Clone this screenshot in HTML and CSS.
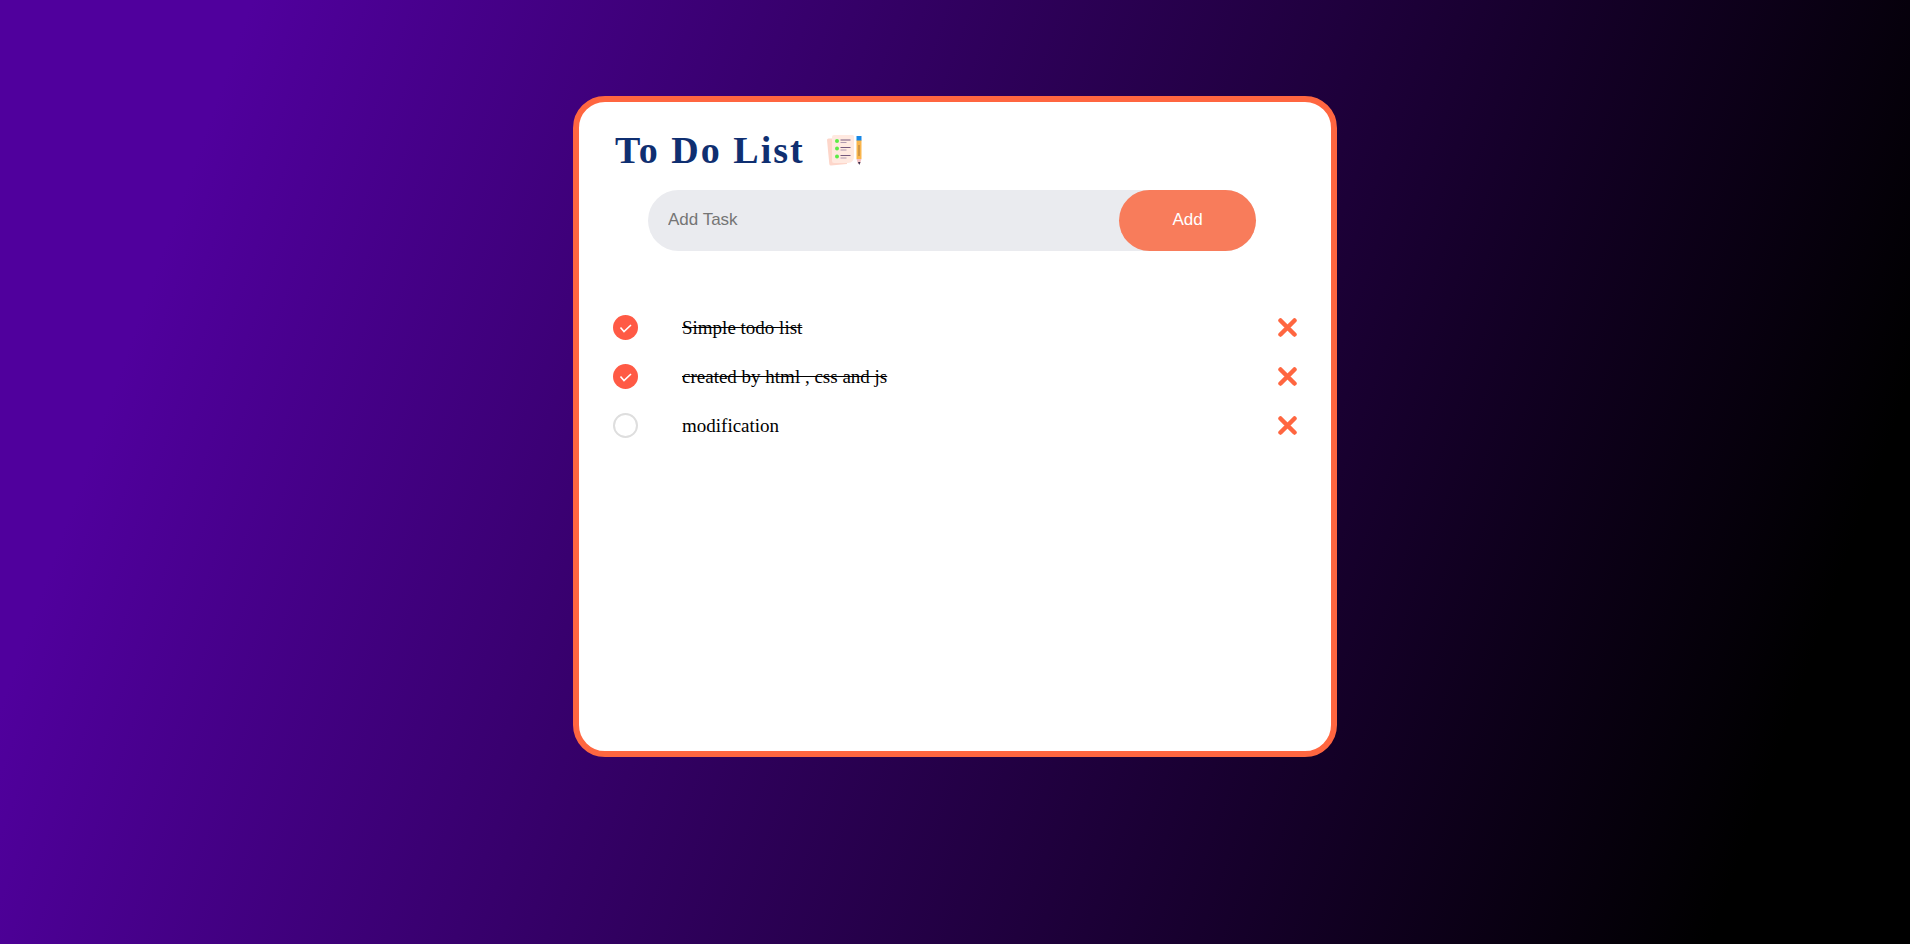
FILE: index.html
```html
<!DOCTYPE html>
<html lang="en">
<head>
<meta charset="utf-8">
<meta name="viewport" content="width=device-width, initial-scale=1">
<title>To Do List</title>
<link rel="stylesheet" href="styles.css">
</head>
<body>
<main class="card">
  <header class="title">
    <h1>To Do List</h1>
    <svg class="title-icon" viewBox="0 0 36 32" aria-hidden="true">
      <path d="M0 6q0-1.500 1.500-1.500H20V30L4 31.500q-1.500 0-1.700-1.500z" fill="#fdd6ca"/>
      <path d="M5 3Q5 1 7 1h18.500q1.500 0 1.500 1.500V22q0 7-6 7H7q-2 0-2-2z" fill="#ffe9e0"/>
      <g fill="#5cec45"><circle cx="10" cy="7" r="2"/><circle cx="10" cy="14.500" r="2"/><circle cx="10" cy="22.500" r="2"/></g>
      <path d="M13.500 6h10M13.500 13.500h10M13.500 21.500h10" stroke="#75597e" stroke-width="1"/>
      <path d="M13.500 8.500h6M13.500 16h6M13.500 24h6" stroke="#b09ab0" stroke-width="1"/>
      <path d="M29.500 6h5v19h-5z" fill="#f9b54c"/>
      <path d="M29.500 2h5v4.500h-5z" fill="#1687e5"/>
      <path d="M32 11v11" stroke="#a9793a"/>
      <path d="M29.500 25h5L33 30h-2z" fill="#f4c3c6"/>
      <path d="M31 28h2.500l-1.200 3z" fill="#35304d"/>
    </svg>
  </header>

  <form class="add-row" onsubmit="return false">
    <input class="add-input" type="text" placeholder="Add Task" aria-label="Add Task">
    <button class="add-button" type="submit">Add</button>
  </form>

  <ul class="tasks">
    <li class="task">
      <input class="check" type="checkbox" id="task-1" checked>
      <label class="task-text" for="task-1">Simple todo list</label>
      <button class="remove" type="button" aria-label="Delete Simple todo list"><svg viewBox="0 0 19 19"><path d="M2.500 2.500l14 14M16.500 2.500l-14 14"/></svg></button>
    </li>
    <li class="task">
      <input class="check" type="checkbox" id="task-2" checked>
      <label class="task-text" for="task-2">created by html , css and js</label>
      <button class="remove" type="button" aria-label="Delete created by html , css and js"><svg viewBox="0 0 19 19"><path d="M2.500 2.500l14 14M16.500 2.500l-14 14"/></svg></button>
    </li>
    <li class="task">
      <input class="check" type="checkbox" id="task-3">
      <label class="task-text" for="task-3">modification</label>
      <button class="remove" type="button" aria-label="Delete modification"><svg viewBox="0 0 19 19"><path d="M2.500 2.500l14 14M16.500 2.500l-14 14"/></svg></button>
    </li>
  </ul>
</main>
</body>
</html>
```
FILE: styles.css
```css
* {
  box-sizing: border-box;
  margin: 0;
  padding: 0;
}

body {
  min-height: 100vh;
  padding-top: 96px;
  background: linear-gradient(109.6deg, rgb(80, 0, 157) 11.2%, rgb(0, 0, 0) 91.1%);
  font-family: "Liberation Serif", "Times New Roman", serif;
}

.card {
  width: 40%;
  min-width: 480px;
  min-height: 70vh;
  margin: 0 auto;
  padding: 24px 34px;
  background: #fff;
  border: 6px solid #ff6640;
  border-radius: 32px;
}

.title {
  display: flex;
  align-items: center;
  gap: 22px;
  padding-left: 2px;
}

.title h1 {
  color: #0f2f71;
  font-size: 38px;
  line-height: 48px;
  letter-spacing: 2px;
}

.title-icon {
  width: 36px;
  height: 32px;
}

.add-row {
  display: flex;
  margin: 16px 41px 0 35px;
  border-radius: 32px;
  background: #eaebef;
}

.add-input {
  flex: 1;
  min-width: 0;
  height: 61px;
  padding: 0 20px 2px;
  border: 0;
  outline: 0;
  background: transparent;
  color: #222;
  font: 17px "Liberation Sans", Arial, sans-serif;
}

.add-input::placeholder {
  color: #757575;
}

.add-button {
  width: 137px;
  padding-bottom: 2px;
  border: 0;
  border-radius: 32px;
  background: #f87c5b;
  color: #fff;
  font: 17px "Liberation Sans", Arial, sans-serif;
  cursor: pointer;
}

.tasks {
  display: grid;
  gap: 24px;
  margin-top: 64px;
  list-style: none;
}

.task {
  display: flex;
  align-items: center;
}

.check {
  flex: none;
  width: 25px;
  height: 25px;
  border: 2px solid #dedede;
  border-radius: 50%;
  appearance: none;
  cursor: pointer;
}

.check:checked {
  border: 0;
  background: #ff5a45 url("data:image/svg+xml,%3Csvg xmlns='http://www.w3.org/2000/svg' viewBox='0 0 25 25'%3E%3Cpath d='M7.500 12.500l3.500 4 7-6.500' fill='none' stroke='%23fff' stroke-width='1.600'/%3E%3C/svg%3E") center / 25px 25px;
}

.task-text {
  flex: 1;
  margin-left: 44px;
  color: #000;
  font-size: 19px;
  line-height: 25px;
}

.check:checked + .task-text {
  text-decoration: line-through;
}

.remove {
  width: 19px;
  height: 19px;
  border: 0;
  background: none;
  cursor: pointer;
}

.remove svg {
  display: block;
  fill: none;
  stroke: #ff6640;
  stroke-width: 4.500;
  stroke-linecap: round;
}
```
